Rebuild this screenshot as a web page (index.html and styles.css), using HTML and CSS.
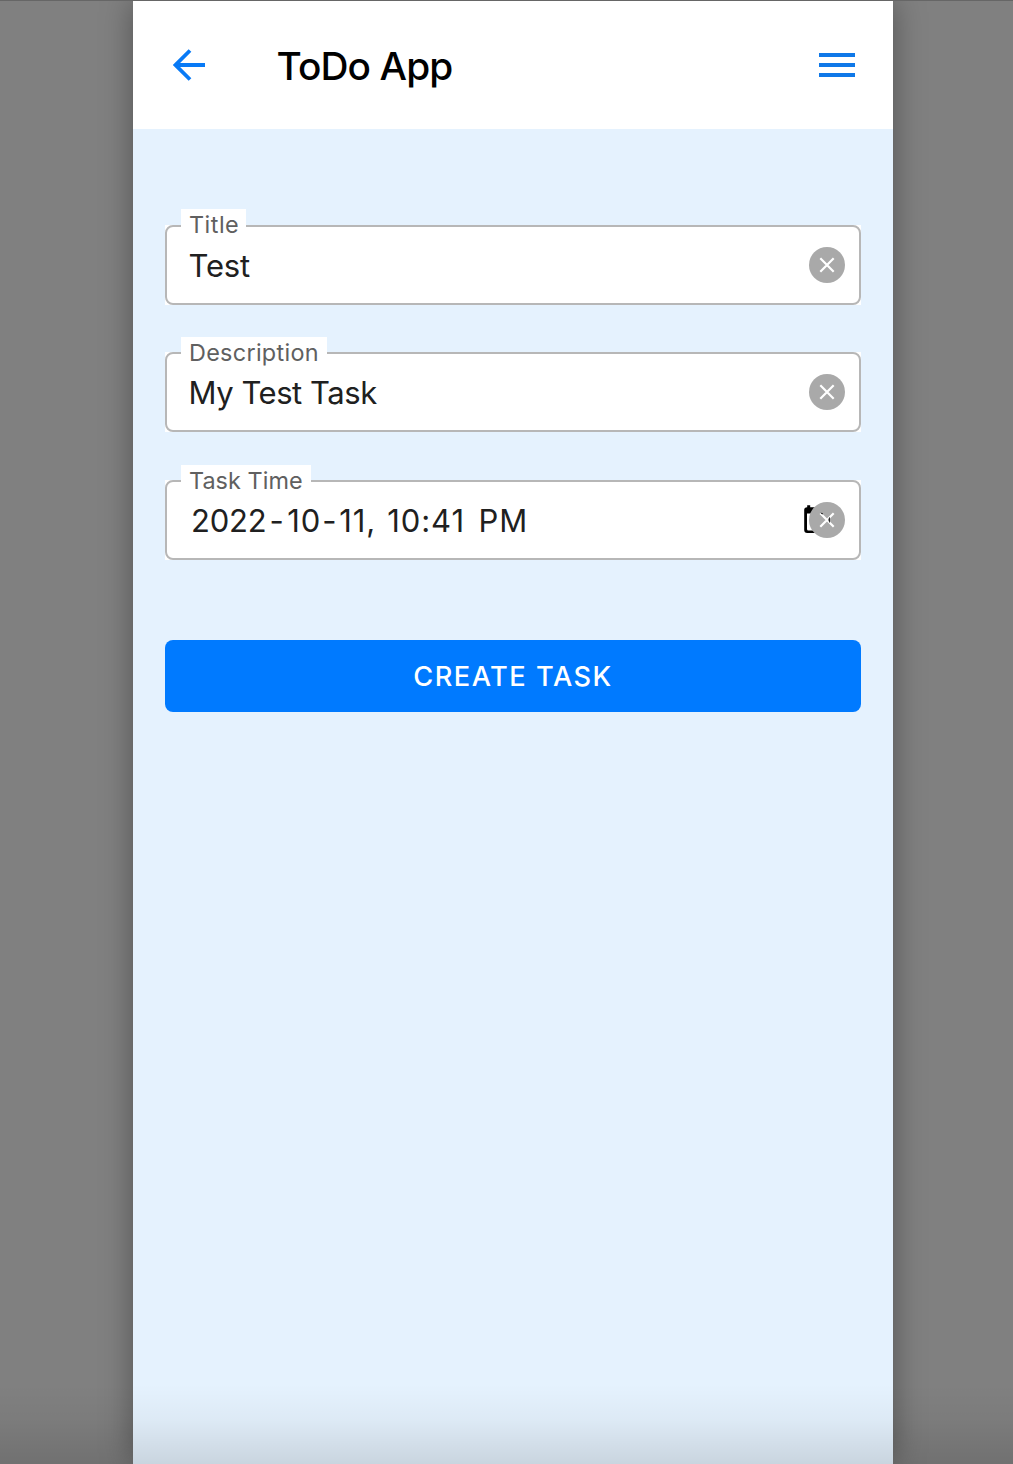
FILE: index.html
```html
<!DOCTYPE html>
<html lang="en">
<head>
<meta charset="utf-8">
<title>ToDo App</title>
<link rel="stylesheet" href="styles.css">
</head>
<body>
<div class="page">
  <main class="app">
    <header class="navbar">
      <svg class="back" width="32" height="32" viewBox="0 0 32 32"><path d="M17 1.500 2.500 16 17 30.500M3 16h29" fill="none" stroke="#087af6" stroke-width="3.800"/></svg>
      <h1 class="heading">ToDo App</h1>
      <svg class="menu" width="36" height="24" viewBox="0 0 36 24"><path d="M0 2h36M0 12h36M0 22h36" stroke="#0f78e8" stroke-width="4"/></svg>
    </header>
    <form class="form">
      <div class="field field-title">
        <label class="label label-title">Title</label>
        <div class="box"><div class="control">
          <span class="value value-title">Test</span>
          <svg width="36" height="36" viewBox="0 0 36 36"><circle cx="18" cy="18" r="18" fill="#a9a9a9"/><path d="m11.300 11.300 13.400 13.400m0-13.400L11.300 24.700" stroke="#fff" stroke-width="2.200"/></svg>
        </div></div>
      </div>
      <div class="field field-description">
        <label class="label label-description">Description</label>
        <div class="box"><div class="control">
          <span class="value value-description">My Test Task</span>
          <svg width="36" height="36" viewBox="0 0 36 36"><circle cx="18" cy="18" r="18" fill="#a9a9a9"/><path d="m11.300 11.300 13.400 13.400m0-13.400L11.300 24.700" stroke="#fff" stroke-width="2.200"/></svg>
        </div></div>
      </div>
      <div class="field field-time">
        <label class="label label-time">Task Time</label>
        <div class="box"><div class="control">
          <span class="value value-time"><span class="year">2022</span><span class="dash dash-wide">-</span>10<span class="dash">-</span>11, 10:41<span class="meridiem"> PM</span></span>
          <svg width="42" height="36" viewBox="0 0 42 36"><path d="M1.200 8q0-2.800 3-2.800V3.300h3v1.900H14V31H4.200q-3 0-3-3Z" fill="#000"/><path d="M4 11.500h10v17H5.400Q4 28.500 4 27Z" fill="#fff"/><circle cx="24" cy="18" r="18" fill="#a9a9a9"/><path d="m17.300 11.300 13.400 13.400m0-13.400L17.300 24.700" stroke="#fff" stroke-width="2.200"/><path d="M17.300 10.800q1.700-.6 2.700.9l-.7.700ZM26.800 14.800q-2.600 2.700 0 6.400Z" fill="#000"/></svg>
        </div></div>
      </div>
      <button class="submit" type="button">CREATE TASK</button>
    </form>
  </main>
</div>
</body>
</html>
```
FILE: styles.css
```css
* { box-sizing: border-box; }
body {
  margin: 0;
  font-family: Inter, "Liberation Sans", sans-serif;
}
.page {
  height: 1464px;
  padding-left: 133px;
  background: #808080;
  border-top: 1px solid #666;
  position: relative;
  overflow: hidden;
}
.page::after {
  content: "";
  position: absolute;
  left: 0;
  right: 0;
  bottom: 0;
  height: 80px;
  background: linear-gradient(transparent, rgba(0, 0, 0, .035) 45%, rgba(0, 0, 0, .12));
}
.app {
  width: 760px;
  height: 100%;
  background: #e5f2fe;
  box-shadow: 0 0 30px rgba(0, 0, 0, .36);
}
.navbar {
  height: 128px;
  padding: 0 38px 0 40px;
  display: flex;
  align-items: center;
  background: #fff;
}
.heading {
  margin: 1px auto 0 71.5px;
  font-size: 38.8px;
  line-height: 48px;
  font-weight: 500;
  letter-spacing: -.88px;
  white-space: nowrap;
}
.form {
  padding: 80px 32px 0;
  display: flex;
  flex-direction: column;
}
.field {
  display: flex;
  flex-direction: column;
  align-items: stretch;
}
.field-title { height: 128px; }
.field-description { height: 128px; }
.field-time { height: 127px; }
.label {
  height: 32px;
  margin: 0 0 -16px 16px;
  padding-left: 8px;
  background: #fff;
  color: #606060;
  font-size: 23.4px;
  line-height: 32px;
  white-space: nowrap;
  position: relative;
  z-index: 1;
}
.label-title { width: 65px; letter-spacing: .5px; }
.label-description { width: 146px; margin-bottom: -17px; letter-spacing: .3px; }
.label-time { width: 130px; margin-bottom: -17px; letter-spacing: .05px; }
.box { background: #fff; }
.control {
  height: 80px;
  padding: 0 14px 0 21.5px;
  display: flex;
  align-items: center;
  justify-content: space-between;
  border: 2px solid #b7b7b7;
  border-radius: 8px;
}
.value {
  color: #202020;
  font-size: 31px;
  line-height: 40px;
  padding-top: 2px;
  white-space: nowrap;
}
.value-title { letter-spacing: -.15px; }
.value-description { letter-spacing: -.45px; }
.value-time { padding-left: 2.5px; letter-spacing: .9px; word-spacing: 1.5px; }
.year { letter-spacing: -.2px; }
.dash { padding: 0 2px 0 1px; }
.dash-wide { padding: 0 2.5px 0 3px; }
.meridiem { word-spacing: 4px; }
.submit {
  height: 72px;
  margin-top: 48px;
  border: 0;
  border-radius: 8px;
  background: #007aff;
  color: #fff;
  font: 500 27.2px/72px Inter, sans-serif;
  letter-spacing: 1.5px;
}
```
